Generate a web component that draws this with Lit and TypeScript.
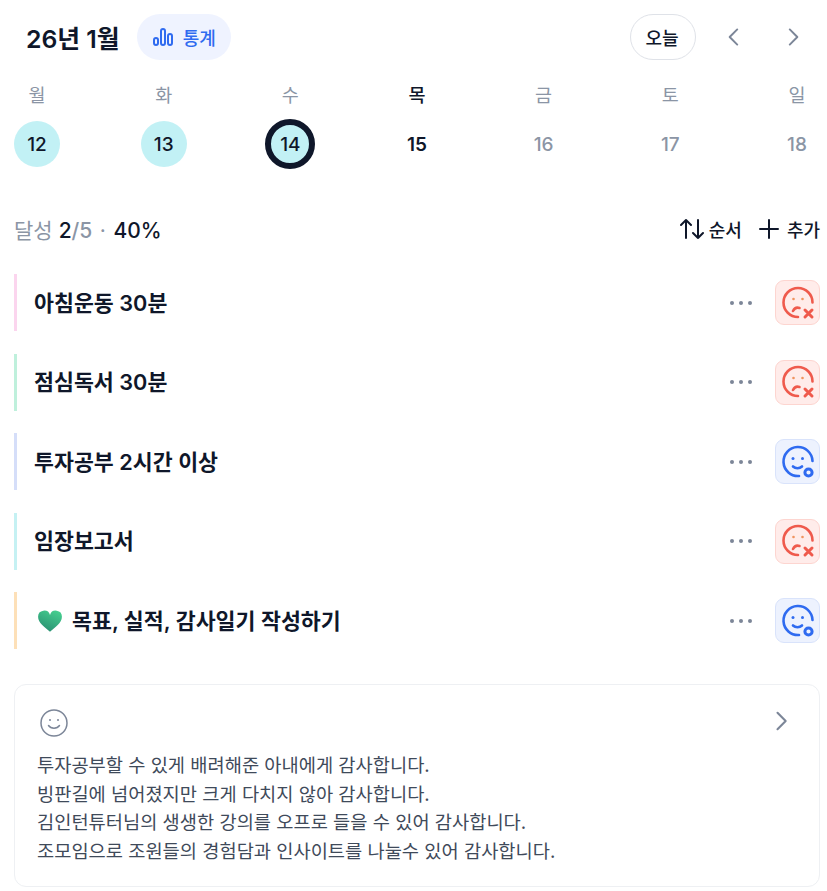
import { LitElement, html, css, svg } from 'lit';
import { customElement } from 'lit/decorators.js';

const days = [
  { label: '월', num: 12, state: 'done' },
  { label: '화', num: 13, state: 'done' },
  { label: '수', num: 14, state: 'today' },
  { label: '목', num: 15, state: 'next' },
  { label: '금', num: 16, state: '' },
  { label: '토', num: 17, state: '' },
  { label: '일', num: 18, state: '' },
];

const habits = [
  { title: '아침운동 30분', bar: '#fbd5ee', ok: false, heart: false },
  { title: '점심독서 30분', bar: '#bff0dc', ok: false, heart: false },
  { title: '투자공부 2시간 이상', bar: '#d5def9', ok: true, heart: false },
  { title: '임장보고서', bar: '#c5f1f3', ok: false, heart: false },
  { title: '목표, 실적, 감사일기 작성하기', bar: '#fde0b8', ok: true, heart: true },
];

const notes = [
  '투자공부할 수 있게 배려해준 아내에게 감사합니다.',
  '빙판길에 넘어졌지만 크게 다치지 않아 감사합니다.',
  '김인턴튜터님의 생생한 강의를 오프로 들을 수 있어 감사합니다.',
  '조모임으로 조원들의 경험담과 인사이트를 나눌수 있어 감사합니다.',
];

const sadIcon = svg`<svg width="34" height="34" viewBox="0 0 34 34" fill="none" stroke="#ef5a4c" stroke-width="2.6" stroke-linecap="round">
  <path d="M17 31A14.500 14.500 0 1 1 31.500 16.500" />
  <path d="M12 25c1.500-3 4-4 6.500-3" />
  <circle cx="12.500" cy="13" r="1.300" fill="#f0935f" stroke="none" />
  <circle cx="21.500" cy="13" r="1.300" fill="#f0935f" stroke="none" />
  <path d="M24 24l7 7M31 24l-7 7" stroke-width="3" />
</svg>`;

const smileIcon = svg`<svg width="34" height="34" viewBox="0 0 34 34" fill="none" stroke="#2f6bf0" stroke-width="2.6" stroke-linecap="round">
  <path d="M18 31A14.500 14.500 0 1 1 31.500 16" />
  <path d="M12 21.500c2.500 2.400 6.500 2.400 9 0" />
  <circle cx="12" cy="13.500" r="1.500" fill="#2f6bf0" stroke="none" />
  <circle cx="21.500" cy="13.500" r="1.500" fill="#2f6bf0" stroke="none" />
  <circle cx="27.500" cy="27.500" r="3.600" stroke-width="3" />
</svg>`;

const heartIcon = svg`<svg width="26" height="26" viewBox="0 0 24 24">
  <defs><linearGradient id="hg" x1="0.8" y1="0" x2="0.3" y2="1">
    <stop offset="0" stop-color="#45cf8f" /><stop offset="1" stop-color="#2a8f72" />
  </linearGradient></defs>
  <path d="M12 22C7 17.500 1 13.500 1 8a5.600 5.600 0 0 1 11-1.500A5.600 5.600 0 0 1 23 8c0 5.500-6 9.500-11 14z" fill="url(#hg)" />
</svg>`;

@customElement('app-root')
export class AppRoot extends LitElement {
  static styles = css`
    :host {
      display: block;
      width: 827px;
      height: 891px;
      overflow: hidden;
      background: #fff;
      font-family: Inter, 'Noto Sans CJK KR', sans-serif;
      color: #0f172a;
    }
    .page {
      padding: 14px 7px 0 14px;
    }
    .header {
      display: flex;
      align-items: center;
      height: 46px;
    }
    .title {
      font-size: 24.800px;
      font-weight: 600;
      margin: 0 17px 0 12px;
      white-space: nowrap;
    }
    .stats-btn {
      display: flex;
      align-items: center;
      gap: 9px;
      height: 46px;
      padding: 0 15px;
      border-radius: 23px;
      background: #eff3ff;
      color: #2f6bf0;
      font-size: 18px;
      font-weight: 500;
    }
    .stats-btn svg {
      display: block;
    }
    .spacer {
      flex: 1;
    }
    .today-btn {
      display: flex;
      align-items: center;
      justify-content: center;
      width: 66px;
      height: 46px;
      box-sizing: border-box;
      border: 1px solid #dfe2e8;
      border-radius: 23px;
      padding-right: 2px;
      font-size: 18px;
      font-weight: 500;
    }
    .nav {
      display: flex;
      gap: 33px;
      margin: 0 14px 0 25px;
    }
    .nav svg {
      display: block;
    }
    .week {
      display: flex;
      justify-content: space-between;
      margin-top: 22px;
    }
    .day {
      display: flex;
      flex-direction: column;
      align-items: center;
      width: 46px;
      gap: 15px;
    }
    .label {
      font-size: 18.500px;
      line-height: 27px;
      margin-bottom: -3px;
      color: #8b95a5;
    }
    .label.next {
      color: #0f172a;
      font-weight: 500;
    }
    .num {
      display: flex;
      align-items: center;
      justify-content: center;
      width: 46px;
      height: 46px;
      box-sizing: border-box;
      border-radius: 50%;
      font-size: 19px;
      font-weight: 500;
      color: #8b95a5;
    }
    .num.done {
      background: #c2f1f5;
      color: #0f172a;
    }
    .num.today {
      width: 50px;
      height: 50px;
      margin: -2px;
      background: #c2f1f5;
      border: 6px solid #0f172a;
      color: #0f172a;
    }
    .num.next {
      color: #0f172a;
      font-weight: 600;
    }
    .summary {
      display: flex;
      align-items: center;
      justify-content: space-between;
      margin-top: 49px;
      height: 26px;
    }
    .rate {
      font-size: 21px;
      font-weight: 500;
      color: #8b95a5;
      display: flex;
      align-items: baseline;
    }
    .rate .ko {
      font-weight: 400;
      margin-right: 6px;
    }
    .rate .dark {
      color: #0f172a;
    }
    .rate .dot {
      margin: 0 7.500px;
      font-weight: 400;
    }
    .tools {
      display: flex;
      align-items: center;
      font-size: 18px;
      font-weight: 500;
    }
    .tools svg {
      display: block;
    }
    .sort {
      margin: 0 16px 0 5px;
    }
    .add {
      margin-left: 7px;
    }
    .habits {
      display: flex;
      flex-direction: column;
      gap: 22.500px;
      margin-top: 32px;
    }
    .habit {
      display: flex;
      align-items: center;
      height: 57px;
      box-sizing: border-box;
      border-left: 3px solid;
      padding-left: 17px;
    }
    .habit-title {
      display: flex;
      align-items: center;
      flex: 1;
      padding-bottom: 3px;
      font-size: 21.700px;
      font-weight: 600;
    }
    .heart {
      display: block;
      height: 26px;
      margin: 3px 9px 0 3px;
    }
    .more {
      display: flex;
      gap: 5px;
      margin-right: 23px;
    }
    .more i {
      width: 4px;
      height: 4px;
      border-radius: 50%;
      background: #7c8698;
    }
    .check {
      display: flex;
      align-items: center;
      justify-content: center;
      width: 45px;
      height: 45px;
      box-sizing: border-box;
      border-radius: 9px;
    }
    .check.bad {
      background: #ffecea;
      border: 1px solid #fdd5d0;
    }
    .check.good {
      background: #edf2fe;
      border: 1px solid #d9e3fb;
    }
    .note {
      margin-top: 35px;
      height: 203px;
      box-sizing: border-box;
      border: 1px solid #eef0f3;
      border-radius: 12px;
      padding: 24px 22px 0 22px;
    }
    .note-top {
      display: flex;
      align-items: center;
      justify-content: space-between;
      height: 28px;
    }
    .smile {
      display: block;
      margin-left: 3px;
    }
    .note-chevron {
      display: block;
      margin-right: 2px;
    }
    .note-text {
      margin-top: 15px;
      font-size: 18.700px;
      line-height: 28.700px;
      white-space: nowrap;
      color: #3f4a5a;
    }
  `;

  chevron(left: boolean, size: number) {
    return html`<svg width=${size} height=${size} viewBox="0 0 24 24" fill="none" stroke="#7c8698" stroke-width="1.800" stroke-linecap="round" stroke-linejoin="round">
      <path d=${left ? 'M15 5l-7 7 7 7' : 'M9 5l7 7-7 7'} />
    </svg>`;
  }

  render() {
    return html`
      <div class="page">
        <div class="header">
          <div class="title">26년 1월</div>
          <div class="stats-btn">
            <svg width="22" height="22" viewBox="0 0 22 22" fill="none" stroke="#2f6bf0" stroke-width="2">
              <rect x="2" y="12" width="4" height="7" rx="2" />
              <rect x="9" y="3" width="4" height="16" rx="2" />
              <rect x="16" y="8" width="4" height="11" rx="2" />
            </svg>
            통계
          </div>
          <div class="spacer"></div>
          <div class="today-btn">오늘</div>
          <div class="nav">${this.chevron(true, 26)}${this.chevron(false, 26)}</div>
        </div>

        <div class="week">
          ${days.map(
            (d) => html`<div class="day">
              <div class="label ${d.state === 'next' ? 'next' : ''}">${d.label}</div>
              <div class="num ${d.state}">${d.num}</div>
            </div>`
          )}
        </div>

        <div class="summary">
          <div class="rate">
            <span class="ko">달성</span><span class="dark">2</span>/5<span class="dot">·</span><span class="dark">40%</span>
          </div>
          <div class="tools">
            <svg width="24" height="22" viewBox="0 0 24 22" fill="none" stroke="#0f172a" stroke-width="2" stroke-linecap="round" stroke-linejoin="round">
              <path d="M6 20V2M1 7l5-5 5 5" />
              <path d="M18 2v18M13 15l5 5 5-5" />
            </svg>
            <span class="sort">순서</span>
            <svg width="22" height="22" viewBox="0 0 22 22" fill="none" stroke="#0f172a" stroke-width="2" stroke-linecap="round">
              <path d="M11 2v18M2 11h18" />
            </svg>
            <span class="add">추가</span>
          </div>
        </div>

        <div class="habits">
          ${habits.map(
            (h) => html`<div class="habit" style="border-left-color: ${h.bar}">
              <div class="habit-title">
                ${h.heart ? html`<span class="heart">${heartIcon}</span>` : ''}${h.title}
              </div>
              <div class="more"><i></i><i></i><i></i></div>
              <div class="check ${h.ok ? 'good' : 'bad'}">${h.ok ? smileIcon : sadIcon}</div>
            </div>`
          )}
        </div>

        <div class="note">
          <div class="note-top">
            <svg class="smile" width="28" height="28" viewBox="0 0 28 28" fill="none" stroke="#7c8698" stroke-width="1.500" stroke-linecap="round">
              <circle cx="14" cy="14" r="13" />
              <path d="M8.500 16.500c2.500 3.500 8.500 3.500 11 0" />
              <circle cx="10" cy="11" r="1" fill="#7c8698" stroke="none" />
              <circle cx="18" cy="11" r="1" fill="#7c8698" stroke="none" />
            </svg>
            <span class="note-chevron">${this.chevron(false, 28)}</span>
          </div>
          <div class="note-text">${notes.map((n) => html`<div>${n}</div>`)}</div>
        </div>
      </div>
    `;
  }
}
